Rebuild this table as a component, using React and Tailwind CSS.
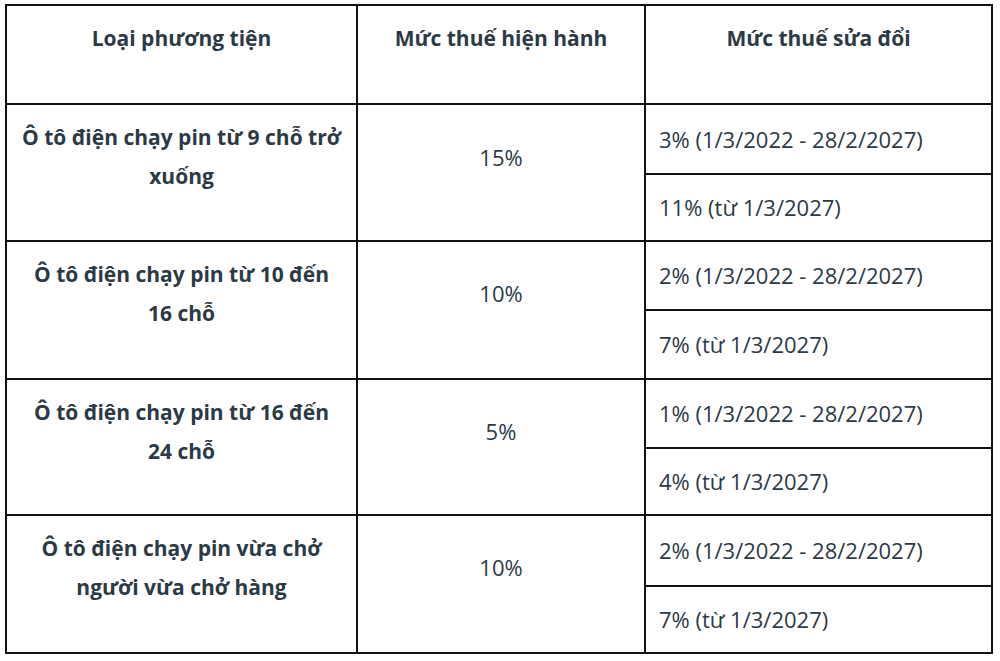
import React from "react";

const rows = [
  {
    name: ["Ô tô điện chạy pin từ 9 chỗ trở", "xuống"],
    cur: "15%",
    a: "3% (1/3/2022 - 28/2/2027)",
    b: "11% (từ 1/3/2027)",
    pb: "pb-[30px]",
  },
  {
    name: ["Ô tô điện chạy pin từ 10 đến", "16 chỗ"],
    cur: "10%",
    a: "2% (1/3/2022 - 28/2/2027)",
    b: "7% (từ 1/3/2027)",
    pb: "pb-[33px]",
  },
  {
    name: ["Ô tô điện chạy pin từ 16 đến", "24 chỗ"],
    cur: "5%",
    a: "1% (1/3/2022 - 28/2/2027)",
    b: "4% (từ 1/3/2027)",
    pb: "pb-[32px]",
  },
  {
    name: ["Ô tô điện chạy pin vừa chở", "người vừa chở hàng"],
    cur: "10%",
    a: "2% (1/3/2022 - 28/2/2027)",
    b: "7% (từ 1/3/2027)",
    pb: "pb-[33px]",
  },
];

const rowStarts = [
  ["row-start-2 row-span-2", "row-start-2", "row-start-3"],
  ["row-start-4 row-span-2", "row-start-4", "row-start-5"],
  ["row-start-6 row-span-2", "row-start-6", "row-start-7"],
  ["row-start-8 row-span-2", "row-start-8", "row-start-9"],
];

export default function App() {
  return (
    <div
      className="w-[1000px] h-[661px] bg-white pl-[5px] pt-[4px] text-[#2c3a45]"
      style={{ fontFamily: '"Open Sans", "Noto Sans", sans-serif' }}
    >
      <div className="grid w-[988px] grid-cols-[349px_286px_345px] grid-rows-[97px_68px_65px_67px_67px_67px_65px_69px_65px] gap-[2px] bg-[#111] p-[2px]">
        <div className="col-start-1 row-start-1 bg-white pt-[13px] text-center text-[21px] font-bold leading-[39px]">
          Loại phương tiện
        </div>
        <div className="col-start-2 row-start-1 bg-white pt-[13px] text-center text-[21px] font-bold leading-[39px]">
          Mức thuế hiện hành
        </div>
        <div className="col-start-3 row-start-1 bg-white pt-[13px] text-center text-[21px] font-bold leading-[39px]">
          Mức thuế sửa đổi
        </div>
        {rows.map((r, i) => (
          <React.Fragment key={i}>
            <div
              className={`col-start-1 ${rowStarts[i][0]} bg-white pt-[13px] text-center text-[21px] font-bold leading-[39px]`}
            >
              {r.name[0]}
              <br />
              {r.name[1]}
            </div>
            <div
              className={`col-start-2 ${rowStarts[i][0]} flex items-center justify-center bg-white ${r.pb} text-[22px] leading-[39px]`}
            >
              {r.cur}
            </div>
            <div
              className={`col-start-3 ${rowStarts[i][1]} flex items-center bg-white pl-[13px] text-[22px] leading-[39px]`}
            >
              {r.a}
            </div>
            <div
              className={`col-start-3 ${rowStarts[i][2]} flex items-center bg-white pl-[13px] text-[22px] leading-[39px]`}
            >
              {r.b}
            </div>
          </React.Fragment>
        ))}
      </div>
    </div>
  );
}
